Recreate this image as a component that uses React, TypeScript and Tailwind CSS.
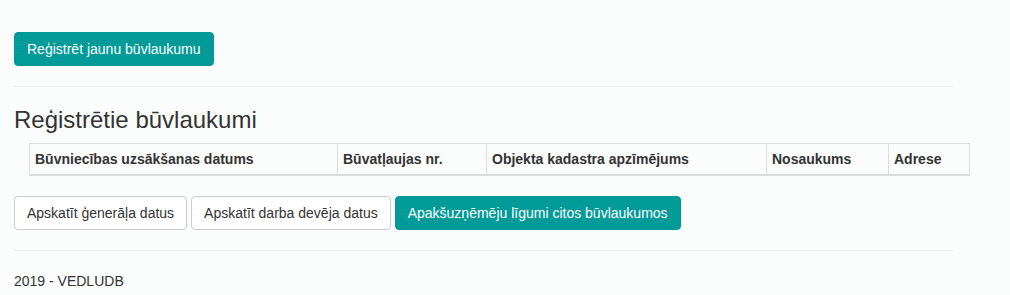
import React from 'react';

const columns = [
  { label: 'Būvniecības uzsākšanas datums', width: 'w-[308px]' },
  { label: 'Būvatļaujas nr.', width: 'w-[149px]' },
  { label: 'Objekta kadastra apzīmējums', width: 'w-[280px]' },
  { label: 'Nosaukums', width: 'w-[122px]' },
  { label: 'Adrese', width: 'w-[81px]' },
];

const App: React.FC = () => {
  return (
    <div className="min-h-[295px] bg-[#fbfcfc] font-['Liberation_Sans',Arial,sans-serif] text-[14px] leading-[20px] text-[#333]">
      <div className="w-[939px] ml-[14px] pt-[32px]">
        {/* Register button */}
        <button
          type="button"
          className="h-[34px] rounded-[4px] border border-[#009695] bg-[#009a99] px-[12px] text-[14px] text-white"
        >
          Reģistrēt jaunu būvlaukumu
        </button>

        <hr className="my-[20px] border-t border-[#eee]" />

        {/* Registered sites */}
        <h3 className="mb-[10px] text-[24px] leading-[26.4px] font-normal text-[#333]">
          Reģistrētie būvlaukumi
        </h3>

        <table className="ml-[15px] w-[940px] table-fixed border-collapse border border-[#ddd]">
          <thead>
            <tr>
              {columns.map((col) => (
                <th
                  key={col.label}
                  className={`${col.width} border border-b-2 border-[#ddd] px-[5px] py-[5px] text-left font-bold text-[#333]`}
                >
                  {col.label}
                </th>
              ))}
            </tr>
          </thead>
        </table>

        {/* Action buttons */}
        <div className="mt-[20px] flex gap-[4px]">
          <button
            type="button"
            className="h-[34px] rounded-[4px] border border-[#ccc] bg-white px-[12px] text-[14px] text-[#333]"
          >
            Apskatīt ģenerāļa datus
          </button>
          <button
            type="button"
            className="h-[34px] rounded-[4px] border border-[#ccc] bg-white px-[12px] text-[14px] text-[#333]"
          >
            Apskatīt darba devēja datus
          </button>
          <button
            type="button"
            className="h-[34px] rounded-[4px] border border-[#009695] bg-[#009a99] px-[12px] text-[14px] text-white"
          >
            Apakšuzņēmēju līgumi citos būvlaukumos
          </button>
        </div>

        <hr className="my-[20px] border-t border-[#eee]" />

        <footer className="pb-[4px]">
          <p>2019 - VEDLUDB</p>
        </footer>
      </div>
    </div>
  );
};

export default App;
